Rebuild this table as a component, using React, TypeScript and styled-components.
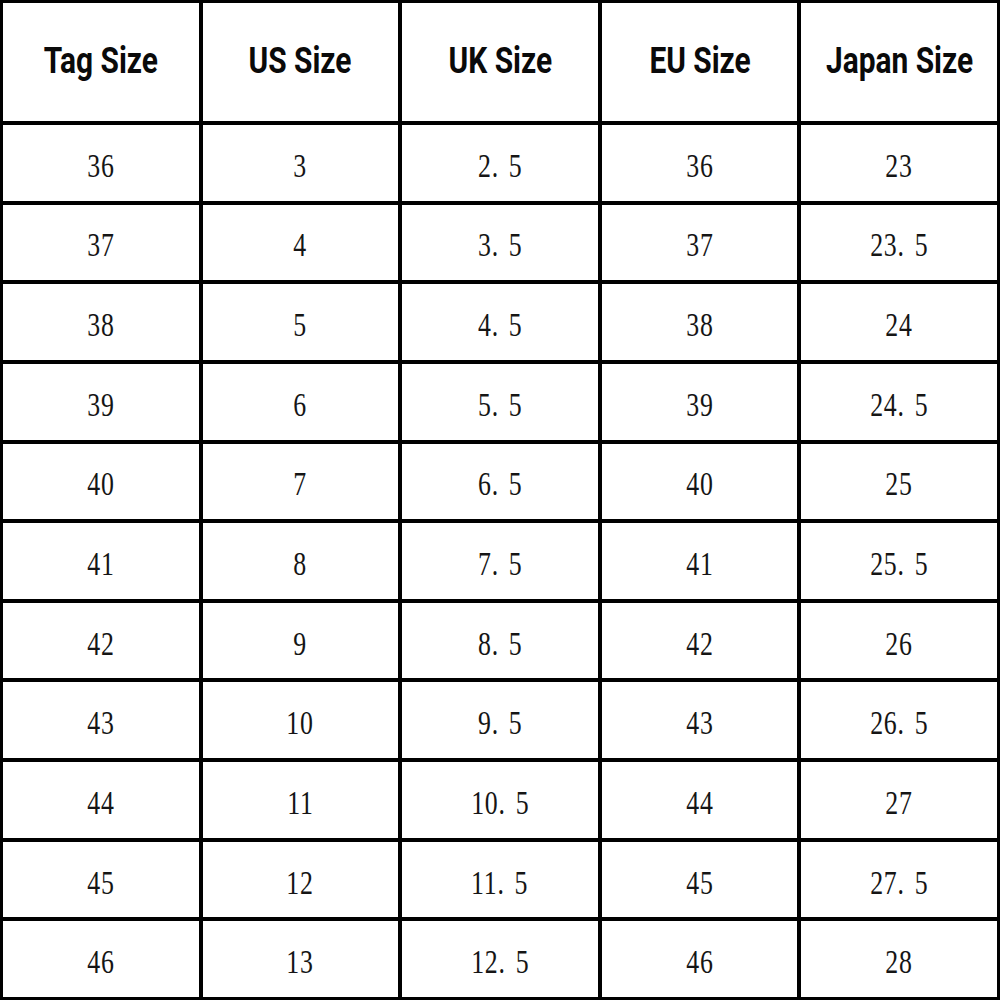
import React from 'react';
import styled, { createGlobalStyle } from 'styled-components';

const GlobalStyle = createGlobalStyle`
  html, body {
    margin: 0;
    padding: 0;
    background: #ffffff;
  }
`;

const headers = ['Tag Size', 'US Size', 'UK Size', 'EU Size', 'Japan Size'];

const rows: string[][] = [
  ['36', '3', '2.5', '36', '23'],
  ['37', '4', '3.5', '37', '23.5'],
  ['38', '5', '4.5', '38', '24'],
  ['39', '6', '5.5', '39', '24.5'],
  ['40', '7', '6.5', '40', '25'],
  ['41', '8', '7.5', '41', '25.5'],
  ['42', '9', '8.5', '42', '26'],
  ['43', '10', '9.5', '43', '26.5'],
  ['44', '11', '10.5', '44', '27'],
  ['45', '12', '11.5', '45', '27.5'],
  ['46', '13', '12.5', '46', '28'],
];

const renderValue = (v: string) => {
  const [whole, frac] = v.split('.');
  if (frac === undefined) return whole;
  return (
    <>
      {whole}
      <Dot>.</Dot>
      {frac}
    </>
  );
};

const App: React.FC = () => {
  return (
    <>
      <GlobalStyle />
      <Chart>
        {headers.map((h) => (
          <HeadCell key={h}>
            <HeadText>{h}</HeadText>
          </HeadCell>
        ))}
        {rows.map((row, i) =>
          row.map((v, j) => (
            <Cell key={`${i}-${j}`}>
              <Value>{renderValue(v)}</Value>
            </Cell>
          ))
        )}
      </Chart>
    </>
  );
};

export default App;

// Styled Components

const Chart = styled.div`
  width: 1000px;
  height: 1000px;
  box-sizing: border-box;
  padding: 3px;
  background: #000;
  display: grid;
  grid-template-columns: repeat(5, 1fr);
  grid-template-rows: 118px repeat(11, 1fr);
  gap: 4px;
`;

const HeadCell = styled.div`
  background: #fff;
  display: flex;
  align-items: center;
  justify-content: center;
`;

const HeadText = styled.span`
  display: inline-block;
  font-family: Roboto, 'Liberation Sans', sans-serif;
  font-weight: 700;
  font-size: 36px;
  color: #0a0a0a;
  transform: scaleX(0.83);
  white-space: nowrap;
  margin-top: -2px;
`;

const Cell = styled.div`
  background: #fff;
  display: flex;
  align-items: center;
  justify-content: center;
`;

const Value = styled.span`
  display: inline-block;
  font-family: 'Liberation Serif', serif;
  font-size: 34px;
  color: #151515;
  letter-spacing: 1px;
  transform: scaleX(0.76);
  white-space: nowrap;
  margin-top: 6px;
`;

const Dot = styled.span`
  margin-right: 13px;
`;
